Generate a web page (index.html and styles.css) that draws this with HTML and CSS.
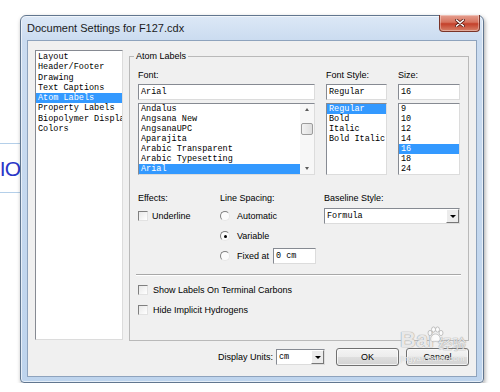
FILE: index.html
```html
<!DOCTYPE html>
<html lang="en">
<head>
    <meta charset="UTF-8">
    <meta name="viewport" content="width=device-width, initial-scale=1.0">
    <title>Document Settings for F127.cdx</title>
    <link rel="stylesheet" href="styles.css">
</head>
<body>

    <!-- bit of the page behind the dialog -->
    <div class="behind"><span class="behind-text">IO</span></div>

    <div class="window">
        <div class="titlebar">
            <span class="title">Document Settings for F127.cdx</span>
            <button class="close-btn">
                <svg width="10" height="8" viewBox="0 0 10 8">
                    <path d="M1.5 1 L8.5 7 M8.5 1 L1.5 7" stroke="#5a1b12" stroke-width="3" stroke-linecap="round"/>
                    <path d="M1.5 1 L8.5 7 M8.5 1 L1.5 7" stroke="#ffffff" stroke-width="1.6" stroke-linecap="round"/>
                </svg>
            </button>
        </div>

        <div class="client">
            <div class="main">
                <ul class="list pages">
                    <li>Layout</li>
                    <li>Header/Footer</li>
                    <li>Drawing</li>
                    <li>Text Captions</li>
                    <li class="sel">Atom Labels</li>
                    <li>Property Labels</li>
                    <li>Biopolymer Display</li>
                    <li>Colors</li>
                </ul>

                <fieldset class="group">
                    <legend>Atom Labels</legend>

                    <div class="font-grid">
                        <span class="lbl">Font:</span>
                        <span class="lbl">Font Style:</span>
                        <span class="lbl">Size:</span>

                        <div class="field">Arial</div>
                        <div class="field">Regular</div>
                        <div class="field">16</div>

                        <div class="fontlist">
                            <ul class="list bare">
                                <li>Andalus</li>
                                <li>Angsana New</li>
                                <li>AngsanaUPC</li>
                                <li>Aparajita</li>
                                <li>Arabic Transparent</li>
                                <li>Arabic Typesetting</li>
                                <li class="sel">Arial</li>
                            </ul>
                            <div class="vscroll">
                                <span class="arrow up"></span>
                                <span class="thumb"></span>
                                <span class="track"></span>
                                <span class="arrow down"></span>
                            </div>
                        </div>
                        <ul class="list short">
                            <li class="sel">Regular</li>
                            <li>Bold</li>
                            <li>Italic</li>
                            <li>Bold Italic</li>
                        </ul>
                        <ul class="list short">
                            <li>9</li>
                            <li>10</li>
                            <li>12</li>
                            <li>14</li>
                            <li class="sel">16</li>
                            <li>18</li>
                            <li>24</li>
                        </ul>
                    </div>

                    <div class="opts">
                        <div class="col">
                            <span class="lbl">Effects:</span>
                            <label class="row"><span class="check"></span>Underline</label>
                        </div>
                        <div class="col">
                            <span class="lbl">Line Spacing:</span>
                            <label class="row radio-row"><span class="radio"></span>Automatic</label>
                            <label class="row radio-row"><span class="radio on"></span>Variable</label>
                            <label class="row radio-row"><span class="radio"></span>Fixed at<span class="field small">0 cm</span></label>
                        </div>
                        <div class="col">
                            <span class="lbl">Baseline Style:</span>
                            <div class="combo baseline"><span class="val">Formula</span><span class="drop"></span></div>
                        </div>
                    </div>

                    <div class="sep"></div>

                    <label class="row"><span class="check"></span>Show Labels On Terminal Carbons</label>
                    <label class="row"><span class="check"></span>Hide Implicit Hydrogens</label>
                </fieldset>
            </div>

            <div class="footer">
                <span class="lbl">Display Units:</span>
                <div class="combo units"><span class="val">cm</span><span class="drop"></span></div>
                <button class="btn ok">OK</button>
                <button class="btn">Cancel</button>
            </div>

            <!-- site watermark stamped over the screenshot -->
            <div class="watermark">
                <div class="wm-top">
                    <span class="wm-big">Bai</span>
                    <svg class="wm-paw" width="18" height="18" viewBox="0 0 18 18">
                        <g fill="rgba(255,255,255,0.8)" stroke="#b5b5b5" stroke-width="0.8">
                            <ellipse cx="4" cy="7" rx="2" ry="2.6"/>
                            <ellipse cx="7.5" cy="3.5" rx="2" ry="2.6"/>
                            <ellipse cx="11.5" cy="3.5" rx="2" ry="2.6"/>
                            <ellipse cx="15" cy="7" rx="2" ry="2.6"/>
                            <path d="M9.5 8 C6 8 4 12 5 14.5 C6 16.5 8 15.5 9.5 15.5 C11 15.5 13 16.5 14 14.5 C15 12 13 8 9.5 8 Z"/>
                        </g>
                    </svg>
                    <span class="wm-cn">经验</span>
                </div>
                <div class="wm-url">jingyan.baidu.com</div>
            </div>
        </div>
    </div>

</body>
</html>
```

FILE: styles.css
```css
body {
    margin: 0;
    background: #ffffff;
    display: flex;
    align-items: flex-start;
    font-family: "Liberation Sans", Arial, sans-serif;
    font-size: 9px;
    color: #000;
}

.behind {
    width: 20px;
    height: 50px;
    margin-top: 143px;
    box-sizing: border-box;
    border-top: 1px solid #b4cfe9;
    border-bottom: 1px solid #b4cfe9;
    overflow: hidden;
    display: flex;
    justify-content: flex-end;
    align-items: center;
}
.behind-text {
    font-size: 21px;
    line-height: 23px;
    letter-spacing: -1px;
    color: #2a36c8;
    white-space: nowrap;
}

.window {
    width: 464px;
    height: 368px;
    margin-top: 15px;
    box-sizing: border-box;
    border: 1px solid #61768f;
    border-radius: 6px 6px 4px 4px;
    padding: 0 6px 5px;
    background: linear-gradient(to bottom, #dce8f6 0, #cbdcf0 24px, #bed4ed 100%);
    box-shadow: 1px 2px 4px rgba(0, 0, 0, 0.35), inset 0 0 0 1px rgba(255, 255, 255, 0.6);
    display: flex;
    flex-direction: column;
}

.titlebar {
    height: 24px;
    display: flex;
    align-items: flex-start;
}
.title {
    font-size: 11px;
    line-height: 24px;
    color: #1b1b1b;
}
.close-btn {
    margin: -1px -3px 0 auto;
    width: 41px;
    height: 17px;
    padding: 0;
    border: 1px solid #7a3428;
    border-top: none;
    border-radius: 0 0 4px 4px;
    background: linear-gradient(to bottom, #e6a091 0, #d6735e 45%, #c4402a 55%, #d7826a 100%);
    box-shadow: inset 0 0 0 1px rgba(255, 255, 255, 0.35);
    display: flex;
    align-items: center;
    justify-content: center;
}

.client {
    flex: 1;
    position: relative;
    border: 1px solid #8ea3bd;
    background: #f0f0f0;
    padding: 9px 7px 0;
}

.main {
    display: flex;
    gap: 6px;
    height: 291px;
}

/* list boxes */
.list {
    margin: 0;
    padding: 0;
    list-style: none;
    background: #fff;
    box-sizing: border-box;
    border: 1px solid;
    border-color: #868a92 #dcdcdc #dcdcdc #868a92;
    font-family: "Liberation Mono", "Courier New", monospace;
    font-size: 8.5px;
    overflow: hidden;
}
.list li {
    padding-left: 2px;
    line-height: 10px;
    white-space: nowrap;
}
.list li.sel {
    background: #3399ff;
    color: #fff;
}
.pages {
    width: 89px;
    height: 290px;
    padding-top: 1px;
}
.pages li {
    line-height: 10.3px;
}
.short {
    height: 72px;
}

.fontlist {
    height: 72px;
    display: flex;
    box-sizing: border-box;
    border: 1px solid;
    border-color: #868a92 #dcdcdc #dcdcdc #868a92;
    background: #fff;
}
.list.bare {
    flex: 1;
    border: none;
}
.vscroll {
    width: 14px;
    display: flex;
    flex-direction: column;
    align-items: center;
    background: #f7f7f7;
}
.arrow {
    height: 11px;
    width: 14px;
    display: flex;
    align-items: center;
    justify-content: center;
}
.arrow::after {
    content: "";
    border-left: 2.5px solid transparent;
    border-right: 2.5px solid transparent;
}
.arrow.up::after {
    border-bottom: 3px solid #5c5c5c;
}
.arrow.down::after {
    border-top: 3px solid #5c5c5c;
}
.thumb {
    margin-top: 8px;
    width: 12px;
    height: 12px;
    box-sizing: border-box;
    border: 1px solid #9c9c9c;
    border-radius: 2px;
    background: linear-gradient(to right, #f2f2f2, #dedede);
}
.track {
    flex: 1;
}

/* group box */
.group {
    width: 339px;
    height: 291px;
    box-sizing: border-box;
    margin: 0;
    padding: 6px 8px 0 8px;
    border: 1px solid #b9b9b9;
}
.group legend {
    margin-left: -4px;
    padding: 0 2px;
    font-size: 9px;
    line-height: 13px;
}

.lbl {
    line-height: 12px;
    white-space: nowrap;
}

.font-grid {
    display: grid;
    grid-template-columns: 177px 61px 62px;
    column-gap: 11px;
    row-gap: 3px;
}

.field {
    height: 16px;
    box-sizing: border-box;
    border: 1px solid;
    border-color: #868a92 #dcdcdc #dcdcdc #868a92;
    background: #fff;
    padding: 0 2px;
    line-height: 14px;
    font-family: "Liberation Mono", "Courier New", monospace;
    font-size: 8.5px;
    white-space: nowrap;
}
.field.small {
    width: 43px;
    margin-left: -3px;
}

.opts {
    display: grid;
    grid-template-columns: 82px 104px 136px;
    margin-top: 17px;
}
.col {
    display: flex;
    flex-direction: column;
}
.col .lbl {
    margin-bottom: 2px;
}

.row {
    height: 20px;
    display: flex;
    align-items: center;
    gap: 4px;
    white-space: nowrap;
}
.radio-row {
    gap: 7px;
}

.check {
    width: 10px;
    height: 10px;
    box-sizing: border-box;
    border: 1px solid;
    border-color: #7f7f7f #e2e2e2 #e2e2e2 #7f7f7f;
    background: linear-gradient(135deg, #e8e8e8, #ffffff);
}
.radio {
    width: 10px;
    height: 10px;
    box-sizing: border-box;
    border-radius: 50%;
    border: 1px solid;
    border-color: #7f7f7f #e6e6e6 #e6e6e6 #7f7f7f;
    background: #fbfbfb;
    display: flex;
    align-items: center;
    justify-content: center;
}
.radio.on::after {
    content: "";
    width: 3px;
    height: 3px;
    border-radius: 50%;
    background: #000;
}

.combo {
    height: 16px;
    display: flex;
    box-sizing: border-box;
    border: 1px solid;
    border-color: #868a92 #dcdcdc #dcdcdc #868a92;
    background: #fff;
}
.combo .val {
    flex: 1;
    padding: 0 2px;
    line-height: 14px;
    font-family: "Liberation Mono", "Courier New", monospace;
    font-size: 8.5px;
}
.combo .drop {
    width: 13px;
    box-sizing: border-box;
    border: 1px solid;
    border-color: #ffffff #777777 #777777 #ffffff;
    background: #ececec;
    display: flex;
    align-items: center;
    justify-content: center;
}
.combo .drop::after {
    content: "";
    border-left: 3px solid transparent;
    border-right: 3px solid transparent;
    border-top: 3px solid #000;
}
.baseline {
    margin-top: 2px;
}

.sep {
    margin: 8px -1px 4px -2px;
    border-top: 1px solid #a8a8a8;
    border-bottom: 1px solid #ffffff;
}
.group > .row {
    gap: 5px;
}

.footer {
    margin-top: 7px;
    height: 18px;
    display: flex;
    align-items: center;
    justify-content: flex-end;
}
.footer .lbl {
    margin-right: 3px;
}
.units {
    width: 49px;
    margin-right: 11px;
}
.btn {
    width: 63px;
    height: 18px;
    padding: 0;
    border: 1px solid #707070;
    border-radius: 3px;
    background: linear-gradient(to bottom, #f4f4f4 0, #ececec 50%, #dfdfdf 50%, #d3d3d3 100%);
    box-shadow: inset 0 0 0 1px rgba(255, 255, 255, 0.7);
    font-family: "Liberation Sans", Arial, sans-serif;
    font-size: 9px;
    color: #000;
}
.btn.ok {
    margin-right: 7px;
}

.watermark {
    position: absolute;
    left: 372px;
    top: 287px;
    pointer-events: none;
}
.wm-top {
    display: flex;
    align-items: flex-end;
}
.wm-big {
    font-size: 22px;
    font-weight: bold;
    line-height: 24px;
    color: rgba(255, 255, 255, 0.8);
    text-shadow: 0 0 1px #9a9a9a, 0 0 1px #9a9a9a;
}
.wm-paw {
    align-self: flex-start;
    margin: -2px -6px 0 -8px;
}
.wm-cn {
    font-family: "Noto Sans CJK SC", sans-serif;
    font-size: 14px;
    line-height: 18px;
    color: rgba(255, 255, 255, 0.8);
    text-shadow: 0 0 1px #9a9a9a, 0 0 1px #9a9a9a;
}
.wm-url {
    margin-top: 2px;
    font-size: 8px;
    line-height: 9px;
    color: rgba(255, 255, 255, 0.85);
    text-shadow: 0 0 1px #a8a8a8;
}
```
